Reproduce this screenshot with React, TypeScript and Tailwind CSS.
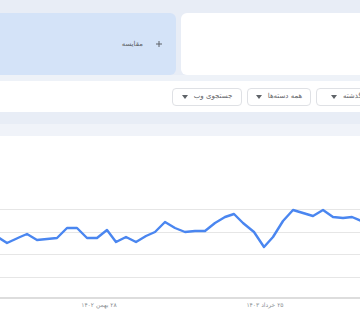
import React from 'react';

// Trend line points, in chart coordinates (chart starts at y=136 on the page)
const POINTS: [number, number][] = [
    [-4, 236], [7, 243], [20, 237], [27, 234], [37, 240], [47, 239], [57, 238], [67, 228],
    [77, 228], [87, 238], [97, 238], [107, 230], [116, 242], [126, 237], [136, 242],
    [146, 236], [155, 232], [165, 222], [175, 228], [180, 230], [185, 232], [195, 231],
    [205, 231], [215, 223], [225, 217], [234, 214], [243, 223], [254, 232], [264, 247],
    [273, 237], [283, 221], [293, 210], [303, 213], [313, 216], [323, 210], [333, 217],
    [343, 218], [352, 217], [364, 222],
];

const CHART_TOP = 136;
const GRID = [209, 232, 254, 277];

const Caret = () => (
    <svg width="6" height="4" viewBox="0 0 6 4" className="shrink-0">
        <path d="M0 0 L6 0 L3 4 Z" fill="#5f6368"/>
    </svg>
);

const FilterButton: React.FC<{ label: string; width: string }> = ({label, width}) => (
    <div
        className={`${width} shrink-0 h-[18px] border border-[#dfe1e5] rounded-[4px] flex items-center justify-center gap-[6px] text-[7px] text-[#5f6368]`}>
        <Caret/>
        <span dir="rtl" className="whitespace-nowrap">{label}</span>
    </div>
);

const TrendChart = () => {
    const path = POINTS.map(([x, y], i) => `${i === 0 ? 'M' : 'L'}${x} ${y - CHART_TOP}`).join(' ');
    return (
        <svg width="360" height="184" viewBox="0 0 360 184" className="block">
            {GRID.map((y) => (
                <line key={y} x1="0" x2="360" y1={y - CHART_TOP + 0.5} y2={y - CHART_TOP + 0.5} stroke="#e6e6e6"
                      strokeWidth="1"/>
            ))}
            <line x1="0" x2="360" y1={298 - CHART_TOP} y2={298 - CHART_TOP} stroke="#d2d2d2" strokeWidth="1.5"/>
            <path d={path} fill="none" stroke="#4a86f0" strokeWidth="2.4" strokeLinejoin="round"
                  strokeLinecap="round"/>
            <text x="99" y="170.5" textAnchor="middle" fontSize="6" fill="#8a8f94" direction="rtl"
                  fontFamily="'DejaVu Sans', sans-serif">۲۸ بهمن ۱۴۰۲
            </text>
            <text x="265" y="170.5" textAnchor="middle" fontSize="6" fill="#8a8f94" direction="rtl"
                  fontFamily="'DejaVu Sans', sans-serif">۲۵ خرداد ۱۴۰۳
            </text>
        </svg>
    );
};

export default function App() {
    return (
        <div className="w-[360px] h-[320px] overflow-hidden bg-white font-['DejaVu_Sans',sans-serif]">
            {/* compare cards */}
            <div className="bg-[#e8edf6] pt-[13px] flex gap-[5px]">
                <div
                    className="shrink-0 w-[196px] -ml-[20px] h-[62px] rounded-[6px] bg-[#d4e3f8] flex items-center justify-end pr-[14px] gap-[13px] text-[#5f6368]">
                    <span dir="rtl" className="text-[7px] mt-[1px]">مقایسه</span>
                    <svg width="6" height="6" viewBox="0 0 6 6" className="shrink-0">
                        <path d="M3 0 V6 M0 3 H6" stroke="#5f6368" strokeWidth="1"/>
                    </svg>
                </div>
                <div className="shrink-0 w-[200px] h-[62px] rounded-[6px] bg-white"/>
            </div>
            <div className="h-[6px] bg-[#eef2f8]"/>

            {/* filters */}
            <div className="h-[31px] bg-white flex items-center pl-[172px] gap-[5px]">
                <FilterButton label="جستجوی وب" width="w-[70px]"/>
                <FilterButton label="همه دسته‌ها" width="w-[64px]"/>
                <div
                    className="w-[90px] shrink-0 h-[18px] border border-[#dfe1e5] rounded-[4px] flex items-center gap-[6px] pl-[14px] text-[7px] text-[#5f6368]">
                    <Caret/>
                    <span dir="rtl" className="whitespace-nowrap">۱۲ ماه گذشته</span>
                </div>
            </div>

            <div className="h-[12px] bg-[#e8edf6]"/>
            <div className="h-[12px] bg-[#f0f3f9]"/>

            {/* interest over time */}
            <TrendChart/>
        </div>
    );
}
